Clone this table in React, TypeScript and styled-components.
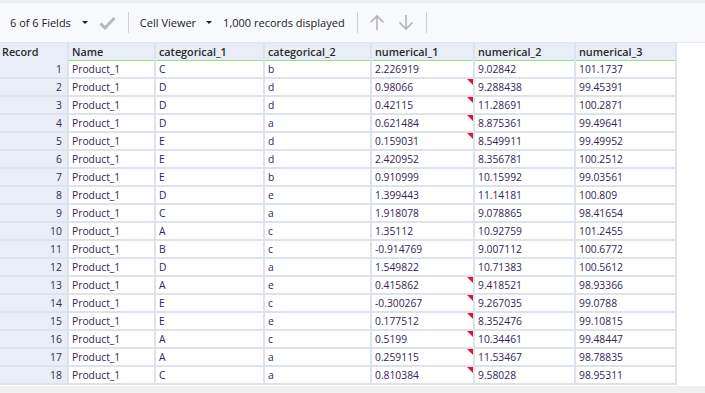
import React from 'react'
import styled, { createGlobalStyle } from 'styled-components'

const GlobalStyle = createGlobalStyle`
  html, body {
    margin: 0;
    padding: 0;
    background: #ffffff;
  }
  body {
    font-family: 'Open Sans', 'Noto Sans', sans-serif;
    font-size: 11px;
  }
`

const Page = styled.div`
  width: 705px;
  height: 393px;
  display: flex;
  flex-direction: column;
  overflow: hidden;
  background: #ffffff;
`
const TopStrip = styled.div`
  height: 3px;
  background: #eceef5;
`
const Toolbar = styled.div`
  height: 39px;
  display: flex;
  align-items: center;
  padding-left: 10px;
  background: #f8f9fc;
  border-bottom: 1px solid #e3e6ef;
  color: #222;
  font-size: 11px;
`
const Label = styled.span<{ $gap?: number }>`
  margin-right: ${({ $gap }) => $gap ?? 0}px;
  white-space: nowrap;
`
const Sep = styled.div`
  width: 1px;
  height: 21px;
  background: #cfd1d6;
  margin: 0 11px 0 12px;
`
const Caret = styled.span`
  width: 0;
  height: 0;
  border-left: 3px solid transparent;
  border-right: 3px solid transparent;
  border-top: 3px solid #222;
  margin-right: 11px;
`
const IconBtn = styled.div<{ $gap?: number }>`
  display: flex;
  align-items: center;
  justify-content: center;
  margin-right: ${({ $gap }) => $gap ?? 0}px;
`

const Body = styled.div`
  flex: 1;
  display: flex;
  flex-direction: column;
`
const Grid = styled.div`
  display: grid;
  grid-template-columns: 67px 85px 107px 105px 101px 99px 99px;
  grid-auto-rows: 16px;
  column-gap: 2px;
  row-gap: 2px;
  width: 675px;
  padding: 0 2px 2px 0;
  background: #dde2ef;
  align-self: flex-start;
`
const HeadCell = styled.div<{ $accent?: boolean }>`
  grid-row: 1;
  height: 17px;
  margin-bottom: -3px;
  background: #e9edf7;
  border-bottom: 2px solid ${({ $accent }) => ($accent ? '#8ee57a' : '#e9edf7')};
  padding-left: ${({ $accent }) => ($accent ? '3px' : '2px')};
  line-height: 17px;
  color: #2a2a2a;
  font-weight: 600;
  font-size: 10.8px;
  white-space: nowrap;
`
const RecordCell = styled.div`
  background: #e9edf7;
  text-align: right;
  padding-right: 5px;
  line-height: 16px;
  font-size: 10.4px;
  color: #2c2f52;
`
const Cell = styled.div<{ $flag?: boolean }>`
  position: relative;
  background: #ffffff;
  padding-left: 3px;
  line-height: 16px;
  font-size: 10.3px;
  color: #33255a;
  white-space: nowrap;
  overflow: hidden;

  &::after {
    content: '';
    display: ${({ $flag }) => ($flag ? 'block' : 'none')};
    position: absolute;
    top: 0;
    right: 0;
    width: 0;
    height: 0;
    border-top: 6px solid #e8112d;
    border-left: 6px solid transparent;
  }
`
const Spacer = styled.div`
  flex: 1;
`
const ScrollBar = styled.div`
  height: 7px;
  background: #f0f0f0;
`

const columns = ['Name', 'categorical_1', 'categorical_2', 'numerical_1', 'numerical_2', 'numerical_3']

const rows: Array<[string, string, string, string, string, string, boolean]> = [
  ['Product_1', 'C', 'b', '2.226919', '9.02842', '101.1737', false],
  ['Product_1', 'D', 'd', '0.98066', '9.288438', '99.45391', true],
  ['Product_1', 'D', 'd', '0.42115', '11.28691', '100.2871', true],
  ['Product_1', 'D', 'a', '0.621484', '8.875361', '99.49641', true],
  ['Product_1', 'E', 'd', '0.159031', '8.549911', '99.49952', true],
  ['Product_1', 'E', 'd', '2.420952', '8.356781', '100.2512', false],
  ['Product_1', 'E', 'b', '0.910999', '10.15992', '99.03561', false],
  ['Product_1', 'D', 'e', '1.399443', '11.14181', '100.809', false],
  ['Product_1', 'C', 'a', '1.918078', '9.078865', '98.41654', false],
  ['Product_1', 'A', 'c', '1.35112', '10.92759', '101.2455', false],
  ['Product_1', 'B', 'c', '-0.914769', '9.007112', '100.6772', false],
  ['Product_1', 'D', 'a', '1.549822', '10.71383', '100.5612', false],
  ['Product_1', 'A', 'e', '0.415862', '9.418521', '98.93366', true],
  ['Product_1', 'E', 'c', '-0.300267', '9.267035', '99.0788', true],
  ['Product_1', 'E', 'e', '0.177512', '8.352476', '99.10815', true],
  ['Product_1', 'A', 'c', '0.5199', '10.34461', '99.48447', true],
  ['Product_1', 'A', 'a', '0.259115', '11.53467', '98.78835', true],
  ['Product_1', 'C', 'a', '0.810384', '9.58028', '98.95311', true],
]

const Check = () => (
  <svg width="17" height="14" viewBox="0 0 17 14">
    <path d="M1.5 7.5 L6 12 L15.5 2" fill="none" stroke="#b9b9b9" strokeWidth="3" />
  </svg>
)

const Arrow = ({ down }: { down?: boolean }) => (
  <svg width="16" height="17" viewBox="0 0 16 17" style={down ? { transform: 'rotate(180deg)' } : undefined}>
    <path d="M8 2 V16 M1.5 8.5 L8 2 L14.5 8.5" fill="none" stroke="#b4b4b4" strokeWidth="1.6" />
  </svg>
)

export default function App() {
  return (
    <Page>
      <GlobalStyle />
      <TopStrip />
      <Toolbar>
        <Label $gap={11}>6 of 6 Fields</Label>
        <Caret />
        <IconBtn>
          <Check />
        </IconBtn>
        <Sep />
        <Label $gap={10}>Cell Viewer</Label>
        <Caret />
        <Label>1,000 records displayed</Label>
        <Sep />
        <IconBtn $gap={13}>
          <Arrow />
        </IconBtn>
        <IconBtn>
          <Arrow down />
        </IconBtn>
        <Sep />
      </Toolbar>
      <Body>
        <Grid>
          <HeadCell>Record</HeadCell>
          {columns.map((c) => (
            <HeadCell key={c} $accent>
              {c}
            </HeadCell>
          ))}
          {rows.map((r, i) => (
            <React.Fragment key={i}>
              <RecordCell>{i + 1}</RecordCell>
              <Cell>{r[0]}</Cell>
              <Cell>{r[1]}</Cell>
              <Cell>{r[2]}</Cell>
              <Cell $flag={r[6]}>{r[3]}</Cell>
              <Cell>{r[4]}</Cell>
              <Cell>{r[5]}</Cell>
            </React.Fragment>
          ))}
        </Grid>
        <Spacer />
        <ScrollBar />
      </Body>
    </Page>
  )
}
